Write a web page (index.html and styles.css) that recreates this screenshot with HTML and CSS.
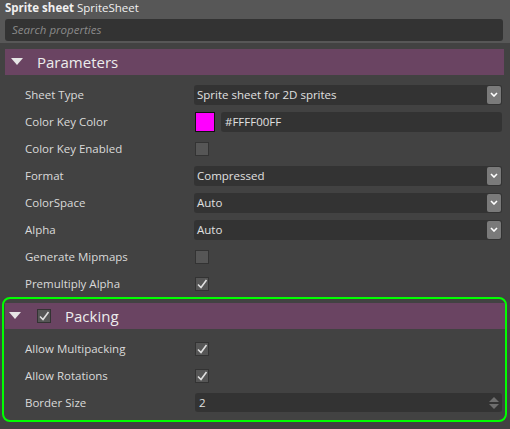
FILE: index.html
```html
<!DOCTYPE html>
<html>
<head>
<meta charset="utf-8">
<link rel="stylesheet" href="styles.css">
</head>
<body>
<div class="top">
  <div class="title"><b>Sprite sheet</b> SpriteSheet</div>
  <div class="search">Search properties</div>
</div>

<div class="group">
  <div class="header">
    <svg class="tri" width="12" height="8" viewBox="0 0 12 8"><polygon points="0,0 12,0 6,7" fill="#e6e6e6"/></svg>
    <span class="htext">Parameters</span>
  </div>
  <div class="rows">
    <div class="row"><span class="label">Sheet Type</span>
      <div class="select"><span>Sprite sheet for 2D sprites</span><i class="arrow"><svg width="8" height="5" viewBox="0 0 8 5"><polyline points="1,1 4,4 7,1" fill="none" stroke="#fff" stroke-width="1.6"/></svg></i></div></div>
    <div class="row"><span class="label">Color Key Color</span>
      <div class="colorval"><span class="swatch"></span><div class="field">#FFFF00FF</div></div></div>
    <div class="row"><span class="label">Color Key Enabled</span><div><span class="check"></span></div></div>
    <div class="row"><span class="label">Format</span>
      <div class="select"><span>Compressed</span><i class="arrow"><svg width="8" height="5" viewBox="0 0 8 5"><polyline points="1,1 4,4 7,1" fill="none" stroke="#fff" stroke-width="1.6"/></svg></i></div></div>
    <div class="row"><span class="label">ColorSpace</span>
      <div class="select"><span>Auto</span><i class="arrow"><svg width="8" height="5" viewBox="0 0 8 5"><polyline points="1,1 4,4 7,1" fill="none" stroke="#fff" stroke-width="1.6"/></svg></i></div></div>
    <div class="row"><span class="label">Alpha</span>
      <div class="select"><span>Auto</span><i class="arrow"><svg width="8" height="5" viewBox="0 0 8 5"><polyline points="1,1 4,4 7,1" fill="none" stroke="#fff" stroke-width="1.6"/></svg></i></div></div>
    <div class="row"><span class="label">Generate Mipmaps</span><div><span class="check"></span></div></div>
    <div class="row"><span class="label">Premultiply Alpha</span><div><span class="check"><svg width="12" height="12" viewBox="0 0 12 12"><polyline points="2,6.5 5,9.5 10.5,2" fill="none" stroke="#e0e0e0" stroke-width="1.6"/></svg></span></div></div>
  </div>
</div>

<div class="group packing">
  <div class="header">
    <svg class="tri" width="12" height="8" viewBox="0 0 12 8"><polygon points="0,0 12,0 6,7" fill="#e6e6e6"/></svg>
    <span class="check hcheck"><svg width="12" height="12" viewBox="0 0 12 12"><polyline points="2,6.5 5,9.5 10.5,2" fill="none" stroke="#e0e0e0" stroke-width="1.6"/></svg></span>
    <span class="htext">Packing</span>
  </div>
  <div class="rows">
    <div class="row"><span class="label">Allow Multipacking</span><div><span class="check"><svg width="12" height="12" viewBox="0 0 12 12"><polyline points="2,6.5 5,9.5 10.5,2" fill="none" stroke="#e0e0e0" stroke-width="1.6"/></svg></span></div></div>
    <div class="row"><span class="label">Allow Rotations</span><div><span class="check"><svg width="12" height="12" viewBox="0 0 12 12"><polyline points="2,6.5 5,9.5 10.5,2" fill="none" stroke="#e0e0e0" stroke-width="1.6"/></svg></span></div></div>
    <div class="row"><span class="label">Border Size</span>
      <div class="number"><span>2</span><i class="spin"><svg width="12" height="16" viewBox="0 0 12 16"><polygon points="1,7 11,7 6,2" fill="#6e6e6e"/><polygon points="1,9 11,9 6,14" fill="#6e6e6e"/></svg></i></div></div>
  </div>
</div>
</body>
</html>
```
FILE: styles.css
```css
* { box-sizing: border-box; }
html, body { margin: 0; padding: 0; }
body {
  width: 510px;
  height: 429px;
  overflow: hidden;
  background: #424242;
  font-family: "Open Sans", "Noto Sans", sans-serif;
  font-size: 11.5px;
  color: #dcdcdc;
}
.top {
  background: #575757;
  padding: 0 7px 2px 5px;
}
.title {
  height: 16px;
  line-height: 16px;
  font-size: 11.5px;
  color: #f0f0f0;
}
.title b { font-weight: 700; }
.search {
  margin-top: 3px;
  height: 22px;
  line-height: 22px;
  background: #333333;
  border-radius: 3px;
  padding-left: 7px;
  color: #8a8a8a;
  font-style: italic;
  font-size: 11.5px;
}
.group { margin-top: 6px; }
.header {
  height: 26px;
  margin: 0 6px 0 5px;
  background: #6a4462;
  display: flex;
  align-items: center;
  padding-left: 6px;
}
.tri { flex: none; }
.htext {
  margin-left: 14px;
  font-size: 15px;
  color: #ececec;
}
.rows { padding-top: 6px; }
.row {
  height: 27px;
  display: grid;
  grid-template-columns: 169px 1fr;
  align-items: center;
  padding: 0 8px 0 25px;
}
.label { color: #dadada; white-space: nowrap; }
.select {
  height: 20px;
  background: #333333;
  border-radius: 3px;
  display: flex;
  align-items: center;
  justify-content: space-between;
  padding: 0 1px 0 3px;
  color: #e0e0e0;
}
.arrow {
  width: 14px;
  height: 18px;
  background: #7a7a7a;
  border-radius: 2px;
  display: flex;
  align-items: center;
  justify-content: center;
}
.colorval { display: flex; align-items: center; gap: 6px; padding-left: 1px; }
.swatch {
  width: 20px;
  height: 20px;
  background: #ff00ff;
  border: 1px solid #111;
  flex: none;
}
.field {
  flex: 1;
  height: 20px;
  line-height: 20px;
  background: #333333;
  border-radius: 3px;
  padding-left: 4px;
  color: #e0e0e0;
}
.check {
  width: 14px;
  height: 14px;
  margin-left: 1px;
  background: #565656;
  border: 1px solid #333;
  display: flex;
  align-items: center;
  justify-content: center;
}
.packing {
  margin: 0 3px 0 2px;
  border: 2px solid #00ff00;
  border-radius: 8px;
  padding-top: 4px;
  height: 125px;
}
.packing .header { margin: 0 0 0 1px; padding-left: 4px; }
.packing .hcheck { margin-left: 16px; flex: none; }
.packing .htext { margin-left: 14px; }
.packing .row { padding: 0 3px 0 21px; }
.number {
  height: 19px;
  background: #333333;
  border-radius: 3px;
  margin-left: 1px;
  display: flex;
  align-items: center;
  justify-content: space-between;
  padding: 0 2px 0 4px;
  color: #e0e0e0;
}
.spin { display: flex; align-items: center; }
```
